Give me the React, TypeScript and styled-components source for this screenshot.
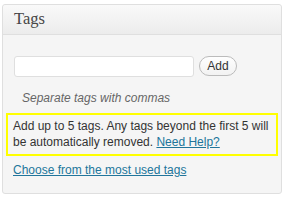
import React from "react";
import styled, { createGlobalStyle } from "styled-components";

const Global = createGlobalStyle`
  html, body { margin: 0; padding: 0; background: #fff; }
  body { font-family: "Liberation Sans", Arial, sans-serif; }
`;

const Page = styled.div`
  padding: 4px 0 0 2px;
`;

const Panel = styled.div`
  width: 280px;
  box-sizing: border-box;
  border: 1px solid #dfdfdf;
  border-radius: 3px;
  background: #f5f5f5;
`;

const Header = styled.div`
  height: 30px;
  box-sizing: border-box;
  padding: 0 0 1px 11px;
  display: flex;
  align-items: center;
  background: linear-gradient(to bottom, #f9f9f9, #ececec);
  border-bottom: 1px solid #dfdfdf;
  border-radius: 3px 3px 0 0;
  font-family: "Liberation Serif", Georgia, serif;
  font-size: 16.5px;
  color: #464646;
`;

const Body = styled.div`
  padding: 21px 3px 15px 3px;
`;

const AddRow = styled.div`
  display: flex;
  align-items: flex-start;
  gap: 5px;
  padding-left: 8px;
`;

const TagInput = styled.input`
  width: 180px;
  height: 21px;
  box-sizing: border-box;
  border: 1px solid #dfdfdf;
  border-radius: 3px;
  background: #fff;
  margin: 0;
`;

const AddButton = styled.button`
  height: 20px;
  box-sizing: border-box;
  width: 38px;
  padding: 0;
  border: 1px solid #bbb;
  border-radius: 11px;
  background: linear-gradient(to bottom, #fefefe, #f2f2f2);
  font-family: "Liberation Sans", Arial, sans-serif;
  font-size: 12px;
  color: #333;
  line-height: 18px;
`;

const Hint = styled.p`
  margin: 14px 0 0 16px;
  font-style: italic;
  font-size: 12px;
  line-height: 14px;
  color: #666;
`;

const Notice = styled.div`
  margin-top: 8px;
  border: 2px solid #ffff00;
  padding: 3px 5px 4px;
  font-size: 12px;
  line-height: 16px;
  color: #333;
`;

const Link = styled.a`
  color: #21759b;
  text-decoration: underline;
`;

const MostUsed = styled.p`
  margin: 6px 0 0 7px;
  font-size: 12px;
  line-height: 16px;
`;

export default function App() {
  return (
    <>
      <Global />
      <Page>
        <Panel>
          <Header>Tags</Header>
          <Body>
            <AddRow>
              <TagInput type="text" />
              <AddButton>Add</AddButton>
            </AddRow>
            <Hint>Separate tags with commas</Hint>
            <Notice>
              Add up to 5 tags. Any tags beyond the first 5 will be automatically removed.{" "}
              <Link href="#">Need Help?</Link>
            </Notice>
            <MostUsed>
              <Link href="#">Choose from the most used tags</Link>
            </MostUsed>
          </Body>
        </Panel>
      </Page>
    </>
  );
}
